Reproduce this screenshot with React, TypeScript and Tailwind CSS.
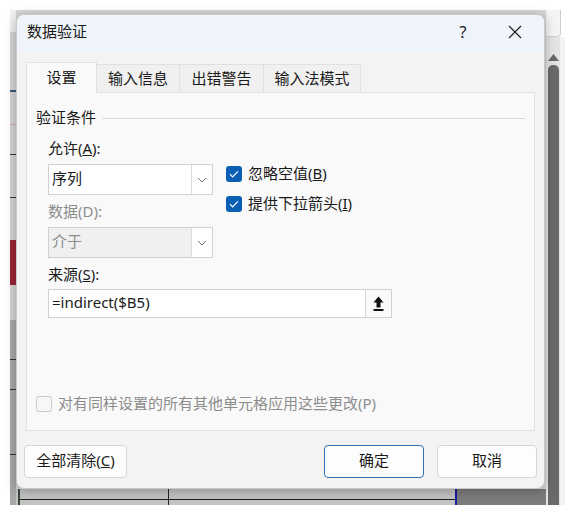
import React from 'react';

const font = { fontFamily: '"Noto Sans", "Noto Sans CJK SC", sans-serif' };

const Chevron = () => (
  <svg width="10" height="6" viewBox="0 0 10 6" fill="none">
    <path d="M1 1l4 4 4-4" stroke="#6b6b6b" strokeWidth="1" />
  </svg>
);

const Check = ({ checked, disabled }: { checked?: boolean; disabled?: boolean }) =>
  checked ? (
    <div className="w-[16px] h-[16px] rounded-[3px] bg-[#0a5fb4] flex items-center justify-center">
      <svg width="10" height="8" viewBox="0 0 10 8" fill="none">
        <path d="M1 4.2l2.6 2.6L9 1.3" stroke="#fff" strokeWidth="1.2" />
      </svg>
    </div>
  ) : (
    <div className={`w-[16px] h-[16px] rounded-[3px] border ${disabled ? 'border-[#c8c8c8]' : 'border-[#888]'} bg-[#f7f7f7]`} />
  );

const Combo = ({ value, disabled }: { value: string; disabled?: boolean }) => (
  <div className={`flex h-[31px] w-[165px] border border-[#d0d0d0] ${disabled ? 'bg-[#f0f0f0] text-[#8d8d8d]' : 'bg-white text-[#1a1a1a]'}`}>
    <div className="flex-1 flex items-center pl-[3px] pb-[2px] text-[15px]">{value}</div>
    <div className="w-[21px] border-l border-[#dcdcdc] bg-white flex items-center justify-center">
      <Chevron />
    </div>
  </div>
);

const tabs = [
  { label: '输入信息', w: 'w-[83px]' },
  { label: '出错警告', w: 'w-[84px]' },
  { label: '输入法模式', w: 'w-[97px]' },
];

export default function App() {
  return (
    <div className="relative w-[575px] h-[514px] bg-white overflow-hidden pl-[10px] pt-[10px]" style={font}>
      {/* spreadsheet behind the dialog */}
      <div className="flex w-[555px] h-[495px]">
        <div className="w-[6px] flex flex-col">
          <div className="h-[22px] bg-[#f2f2f2]" />
          <div className="h-[60px] bg-[#d6d6d6] border-b-2 border-[#3b5778]" />
          <div className="h-[33px] bg-[#d6d6d6] border-b border-[#d9a0a8]" />
          <div className="h-[30px] bg-[#d6d6d6] border-b border-[#333]" />
          <div className="h-[43px] bg-[#d6d6d6] border-b border-[#333]" />
          <div className="h-[42px] bg-[#d6d6d6]" />
          <div className="h-[45px] bg-[#9d2537]" />
          <div className="h-[35px] bg-[#d6d6d6]" />
          <div className="h-[40px] bg-[#a9a9a9] border-b border-[#333]" />
          <div className="h-[30px] bg-[#a9a9a9] border-b border-[#333]" />
          <div className="h-[65px] bg-[#a9a9a9] border-b border-[#333]" />
          <div className="flex-1 bg-[#a9a9a9]" />
        </div>
        <div className="w-[530px] flex flex-col">
          <div className="flex-1 bg-[#d6d6d6]" />
          <div className="h-[16px] flex">
            <div className="w-[4px] bg-[#c4c4c4] border-r-2 border-[#3c4a3c]" />
            <div className="w-[149px] bg-[#c4c4c4] border-r border-[#222] flex flex-col">
              <div className="h-[10px]" />
              <div className="border-t border-[#222]" />
            </div>
            <div className="w-[286px] bg-[#c4c4c4] flex flex-col">
              <div className="h-[10px]" />
              <div className="border-t border-[#222]" />
            </div>
            <div className="w-[2px] bg-[#1c1c9c]" />
            <div className="flex-1 bg-[#7c7c7c]" />
          </div>
        </div>
        <div className="w-[19px] flex flex-col">
          <div className="h-[27px] w-[15px] bg-[#f4f4f4] border-r border-b border-[#cfcfcf] rounded-br-[4px]" />
          <div className="flex-1 flex">
            <div className="w-[14px] bg-[#e4e4e4] flex flex-col items-center pt-[17px]">
              <svg width="11" height="7" viewBox="0 0 11 7">
                <path d="M5.5 0L11 7H0z" fill="#6a6a6a" />
              </svg>
              <div className="mt-[4px] w-[11px] flex-1 bg-[#6a6a6a] rounded-t-[5px]" />
            </div>
            <div className="flex-1 bg-[#f3f3f3]" />
          </div>
        </div>
      </div>

      {/* dialog window */}
      <div className="absolute left-[16px] top-[14px] w-[529px] h-[475px] rounded-[8px] overflow-hidden border border-[#c9c9c9] shadow-[0_2px_12px_rgba(0,0,0,0.28)] flex flex-col bg-[#f3f3f3] text-[#1a1a1a]">
        <div className="h-[36px] bg-[#eef4f9] flex items-center pl-[10px] pb-[3px] shrink-0">
          <span className="text-[15px]">数据验证</span>
          <span className="ml-auto text-[16px] w-[14px] text-center">?</span>
          <div className="ml-[38px] mr-[22px] w-[14px] h-[14px] flex items-center justify-center">
            <svg width="14" height="14" viewBox="0 0 14 14" fill="none">
              <path d="M1 1l12 12M13 1L1 13" stroke="#1a1a1a" strokeWidth="1.1" />
            </svg>
          </div>
        </div>

        <div className="px-[9px] pt-[10px]">
          <div className="flex items-end h-[31px]">
            <div className="w-[71px] h-[31px] bg-[#f9f9f9] border border-b-0 border-[#e2e2e2] flex items-center justify-center pb-[2px] text-[15px] relative z-10 -mb-[1px]">
              设置
            </div>
            {tabs.map((t) => (
              <div
                key={t.label}
                className={`${t.w} h-[28px] bg-[#f0f0f0] border border-l-0 border-b-0 border-[#e0e0e0] flex items-center justify-center pb-[1px] text-[15px]`}
              >
                {t.label}
              </div>
            ))}
          </div>

          <div className="h-[339px] bg-[#f9f9f9] border border-[#e2e2e2] flex flex-col">
            <div className="mt-[14px] h-[20px] flex items-center pl-[9px] pr-[9px]">
              <span className="text-[15px]">验证条件</span>
              <div className="flex-1 ml-[6px] mt-[2px] border-t border-[#d9d9d9]" />
            </div>

            <div className="flex pl-[21px] mt-[11px]">
              <div className="flex flex-col">
                <div className="h-[20px] flex items-center text-[15px]">
                  允许(<span className="underline">A</span>):
                </div>
                <div className="mt-[6px]">
                  <Combo value="序列" />
                </div>
                <div className="mt-[6px] h-[20px] flex items-center text-[15px] text-[#8d8d8d]">数据(D):</div>
                <div className="mt-[6px]">
                  <Combo value="介于" disabled />
                </div>
              </div>
              <div className="ml-[13px] pt-[28px] flex flex-col gap-[14px]">
                <div className="flex items-center h-[16px]">
                  <Check checked />
                  <span className="ml-[6px] text-[15px] -mt-[2px]">
                    忽略空值(<span className="underline">B</span>)
                  </span>
                </div>
                <div className="flex items-center h-[16px]">
                  <Check checked />
                  <span className="ml-[6px] text-[15px] -mt-[2px]">
                    提供下拉箭头(<span className="underline">I</span>)
                  </span>
                </div>
              </div>
            </div>

            <div className="pl-[21px] mt-[6px] h-[20px] flex items-center text-[15px]">
              来源(<span className="underline">S</span>):
            </div>
            <div className="ml-[21px] mt-[5px] w-[344px] h-[29px] bg-white border border-[#d0d0d0] flex">
              <div className="flex-1 flex items-center pl-[3px] pb-[2px] text-[15px]">=indirect($B5)</div>
              <div className="w-[26px] bg-[#fafafa] border-l border-[#d6d6d6] flex items-center justify-center">
                <svg width="11" height="16" viewBox="0 0 11 16">
                  <path d="M5.5 0.5L10.5 6.5H7.5V11.5H3.5V6.5H0.5z" fill="#111" />
                  <rect x="0.5" y="13" width="10" height="2" fill="#111" />
                </svg>
              </div>
            </div>

            <div className="mt-[76px] h-[20px] pl-[9px] flex items-center">
              <Check disabled />
              <span className="ml-[6px] text-[15px] text-[#8d8d8d] -mt-[2px]">对有同样设置的所有其他单元格应用这些更改(P)</span>
            </div>
          </div>
        </div>

        <div className="flex items-center px-[7px] mt-[14px]">
          <div className="w-[103px] h-[33px] rounded-[4px] bg-[#fdfdfd] border border-[#d6d6d6] flex items-center justify-center pb-[2px] text-[15px]">
            全部清除(<span className="underline">C</span>)
          </div>
          <div className="ml-auto w-[100px] h-[33px] rounded-[4px] bg-[#fdfdfd] border border-[#2f6fb5] flex items-center justify-center pb-[2px] text-[15px]">
            确定
          </div>
          <div className="ml-[13px] w-[100px] h-[33px] rounded-[4px] bg-[#fdfdfd] border border-[#d6d6d6] flex items-center justify-center pb-[2px] text-[15px]">
            取消
          </div>
        </div>
      </div>
    </div>
  );
}
